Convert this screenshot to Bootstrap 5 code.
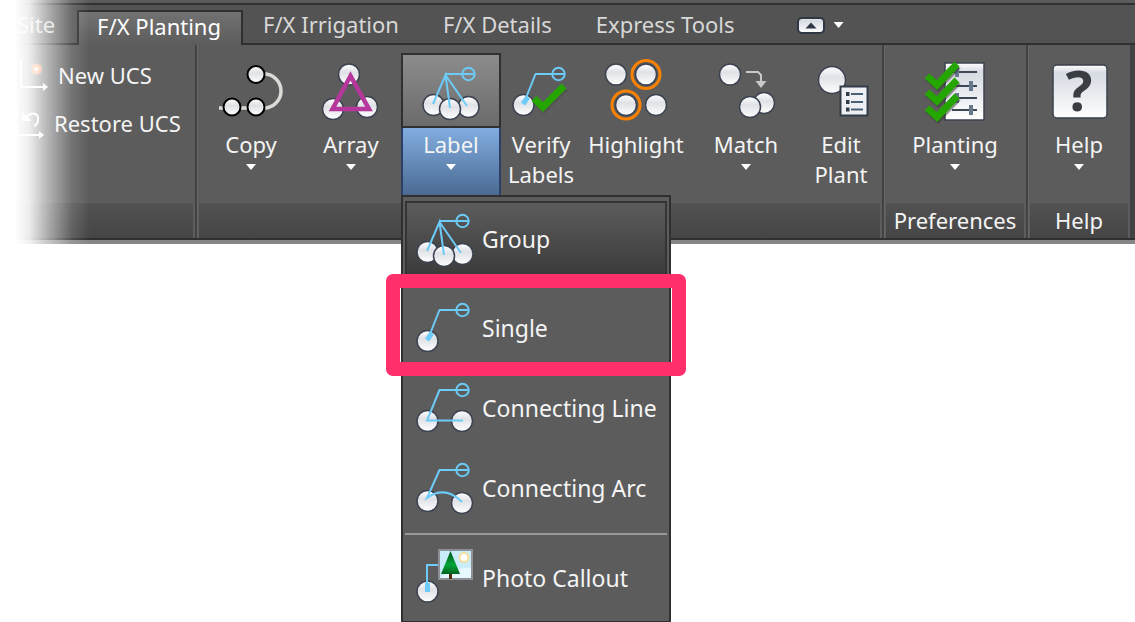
<!DOCTYPE html>
<html lang="en">
<head>
<meta charset="utf-8">
<meta name="viewport" content="width=device-width, initial-scale=1">
<title>F/X Planting ribbon</title>
<link href="https://cdn.jsdelivr.net/npm/bootstrap@5.3.0/dist/css/bootstrap.min.css" rel="stylesheet">
<style>
  body { font-family: "Noto Sans", "Open Sans", sans-serif; font-size: 22px; line-height: 30px; background: #fff; color: #f4f4f4; }
  button, a { color: inherit; font: inherit; }
  .fx-ribbon { background: #5c5c5c; border-bottom: 4px solid #858585; }
  .fx-tabs { height: 45px; padding: 5px 0 0 0; background: #535353; border-top: 3px solid #5a5a5a; box-shadow: inset 0 2px #303030, inset 0 -2px #303030; }
  .fx-tab { height: 37px; padding: 0 22px; line-height: 32px; color: #d8d8d8; text-decoration: none; white-space: nowrap; }
  .fx-tab:first-child { padding-left: 17px; }
  .fx-tab.active { height: 35px; align-self: flex-end; margin-right: -2px; padding: 0 20px 0 18px; line-height: 28px; color: #fff; background: linear-gradient(#727272, #5c5c5c); border: 2px solid #303030; border-bottom: 0; }
  .fx-collapse { margin-left: 40px; gap: 9px; height: 34px; }
  .fx-bare { background: none; border: 0; padding: 0; }
  .fx-panels { border-bottom: 2px solid #303030; }
  .fx-panel { border-right: 2px solid #424242; box-shadow: inset 1px 0 #686868; }
  .fx-tools { height: 158px; padding: 8px 4px 0 4px; }
  .fx-title { height: 35px; margin: 0 2px; line-height: 35px; text-align: center; background: linear-gradient(#525252, #454545); }
  .fx-ucs { width: 197px; }
  .fx-ucs .fx-tools { padding: 6px 0 0 20px; }
  .fx-ucs button { height: 48px; gap: 10px; }
  .fx-ucs button + button { margin-left: -4px; }
  .fx-tool { height: 142px; }
  .fx-face { height: 75px; padding-top: 9px; }
  .fx-name { padding-top: 1px; height: 67px; }
  .fx-open .fx-face { background: linear-gradient(#8c8c8c, #6b6b6b); border: 2px solid #303030; padding-top: 7px; }
  .fx-open .fx-name { background: linear-gradient(#82ade0, #4a6a92); border: 2px solid #2c3f66; border-top: 0; border-bottom: 0; }
  .fx-w80 { width: 80px; } .fx-w94 { width: 94px; } .fx-w100 { width: 100px; } .fx-w110 { width: 110px; } .fx-w134 { width: 134px; }
  .fx-caret { display: block; width: 10px; height: 6px; margin: 5px auto 0; background: #fff; clip-path: polygon(0 0, 100% 0, 50% 100%); }
  .fx-icon { width: 60px; height: 60px; overflow: visible; display: block; margin: 0 auto; }
  .fx-end { width: 3px; background: #444; }
  .fx-fade { position: absolute; inset: 0 auto -4px 0; width: 90px; pointer-events: none; background: linear-gradient(90deg, #fff 16%, rgba(255,255,255,.9) 32%, rgba(255,255,255,.5) 56%, rgba(255,255,255,.14) 80%, rgba(255,255,255,0)); }
  .fx-menu { position: absolute; top: 142px; left: 0; z-index: 5; width: 270px; padding: 4px 2px 2px; font-size: 23px; background: #5c5c5c; border: 2px solid #303030; }
  .fx-item { position: relative; height: 80px; padding: 0 0 2px 10px; gap: 7px; text-align: left; }
  .fx-item .fx-icon { margin: 0; flex: none; }
  .fx-item.fx-current { height: 78px; margin-bottom: 10px; background: linear-gradient(#5c5c5c, #3a3a3a); border: 2px solid #343434; padding-left: 8px; }
  .fx-mark { position: absolute; inset: -15px -19px -7px -19px; border: 14px solid #ff2f6b; border-radius: 7px; }
  .fx-menu hr { margin: 4px 0; border-top: 2px solid #999; opacity: 1; }
  .ball { fill: url(#ball); stroke: #3b4350; stroke-width: 1.5; }
  .wire { fill: none; stroke: #6ccbf7; stroke-width: 2; }
  .tick { fill: none; stroke: #24a500; stroke-width: 7; }
</style>
</head>
<body class="min-vh-100">
<svg width="0" height="0" class="position-absolute" aria-hidden="true">
  <defs>
    <linearGradient id="ball" x1="0" y1="0" x2="0" y2="1"><stop offset="0" stop-color="#fff"/><stop offset=".4" stop-color="#dfe1e6"/><stop offset="1" stop-color="#fff"/></linearGradient>
    <linearGradient id="paper" x1="0" y1="0" x2="0" y2="1"><stop offset="0" stop-color="#fff"/><stop offset=".15" stop-color="#d6dae2"/><stop offset="1" stop-color="#fff"/></linearGradient>
    <linearGradient id="tree" x1="0" y1="0" x2="0" y2="1"><stop offset="0" stop-color="#004d1c"/><stop offset=".6" stop-color="#00a537"/><stop offset="1" stop-color="#006320"/></linearGradient>
  </defs>
  <symbol id="loop" viewBox="0 0 60 60" overflow="visible"><g class="wire"><path d="M24 12H54"/><circle cx="47.500" cy="12" r="6.200"/></g></symbol>
  <symbol id="group" viewBox="0 0 60 60" overflow="visible">
    <circle class="ball" cx="12.500" cy="43" r="10.500"/><circle class="ball" cx="47.500" cy="45" r="10.500"/><circle class="ball" cx="29" cy="47" r="10.500"/>
    <path class="wire" d="M12 42 24.500 13 29 46M24.500 13 46 44"/><use href="#loop"/>
  </symbol>
  <symbol id="single" viewBox="0 0 60 60" overflow="visible">
    <circle class="ball" cx="12.500" cy="43" r="10.500"/><path class="wire" d="M15 36 24.500 12"/><path d="M17 35 12 42" fill="none" stroke="#6ccbf7" stroke-width="5"/><use href="#loop"/>
  </symbol>
</svg>

<header class="fx-ribbon position-relative">
  <nav class="fx-tabs d-flex" aria-label="Ribbon tabs">
    <a class="fx-tab" href="#site">Site</a>
    <a class="fx-tab active" href="#planting" aria-current="page">F/X Planting</a>
    <a class="fx-tab" href="#irrigation">F/X Irrigation</a>
    <a class="fx-tab" href="#details">F/X Details</a>
    <a class="fx-tab" href="#express">Express Tools</a>
    <button class="fx-bare fx-collapse d-flex align-items-center" aria-label="Minimize ribbon">
      <svg width="28" height="17" viewBox="0 0 28 17"><rect x="1" y="1" width="26" height="15" rx="4" fill="url(#paper)" stroke="#2f3744" stroke-width="2"/><path d="M8.500 11.500 14 5.500 19.500 11.500Z" fill="#2f3744"/></svg>
      <span class="fx-caret mt-0"></span>
    </button>
  </nav>

  <div class="fx-panels d-flex">
    <section class="fx-panel fx-ucs flex-shrink-0">
      <div class="fx-tools">
        <button class="fx-bare d-flex align-items-center text-nowrap">
          <svg width="28" height="34" viewBox="0 0 28 34"><path d="M1 1V29H24" fill="none" stroke="#fff" stroke-width="2"/><path d="M23 25 28 29 23 33Z" fill="#fff"/><g stroke="#ff8a4a" stroke-width="3"><path d="M11 11H22M16.500 5.500V16.500M12.500 7 20.500 15M20.500 7 12.500 15"/></g><circle cx="16.500" cy="11" r="2" fill="#fff"/></svg>
          New UCS
        </button>
        <button class="fx-bare d-flex align-items-center text-nowrap">
          <svg width="28" height="34" viewBox="0 0 28 34"><path d="M1 1V29H24" fill="none" stroke="#fff" stroke-width="2"/><path d="M23 25 28 29 23 33Z" fill="#fff"/><path d="M10 12C16 4 23 8 22 14C22 17 20 19 18 20" fill="none" stroke="#fff" stroke-width="2"/><path d="M6 6V15H15Z" fill="#fff"/></svg>
          Restore UCS
        </button>
      </div>
      <div class="fx-title"></div>
    </section>

    <section class="fx-panel flex-grow-1">
      <div class="fx-tools d-flex pe-0">
        <button class="fx-bare fx-tool fx-w100">
          <span class="fx-face d-block"><svg class="fx-icon" viewBox="0 0 60 60"><path d="M-2 46H35M43 12A17 17 0 0 1 43 46" fill="none" stroke="#dcdad6" stroke-width="3.500"/><g fill="url(#ball)" stroke="#000" stroke-width="2"><circle cx="35" cy="12.500" r="8.500"/><circle cx="11" cy="45" r="8.500"/><circle cx="35" cy="45" r="8.500"/></g></svg></span>
          <span class="fx-name d-block">Copy<span class="fx-caret"></span></span>
        </button>
        <button class="fx-bare fx-tool fx-w100">
          <span class="fx-face d-block"><svg class="fx-icon" viewBox="0 0 60 60"><circle class="ball" cx="28" cy="12.500" r="10.500"/><circle class="ball" cx="12" cy="47" r="10.500"/><circle class="ball" cx="46" cy="45" r="10.500"/><path d="M29.500 14 11.500 47H48Z" fill="none" stroke="#b5379b" stroke-width="4.500"/></svg></span>
          <span class="fx-name d-block">Array<span class="fx-caret"></span></span>
        </button>
        <div class="dropdown">
          <button class="fx-bare fx-tool fx-w100 fx-open" aria-expanded="true">
            <span class="fx-face d-block"><svg class="fx-icon"><use href="#group"/></svg></span>
            <span class="fx-name d-block">Label<span class="fx-caret"></span></span>
          </button>
          <div class="fx-menu">
            <button class="fx-bare fx-item fx-current d-flex align-items-center w-100"><svg class="fx-icon"><use href="#group"/></svg>Group</button>
            <button class="fx-bare fx-item d-flex align-items-center w-100"><svg class="fx-icon"><use href="#single"/></svg>Single<span class="fx-mark"></span></button>
            <button class="fx-bare fx-item d-flex align-items-center w-100 text-nowrap"><svg class="fx-icon" viewBox="0 0 60 60"><circle class="ball" cx="12.500" cy="43" r="10.500"/><circle class="ball" cx="47" cy="43" r="10.500"/><path class="wire" d="M24.500 12 12 42.500H48"/><use href="#loop"/></svg>Connecting Line</button>
            <button class="fx-bare fx-item d-flex align-items-center w-100 text-nowrap"><svg class="fx-icon" viewBox="0 0 60 60"><circle class="ball" cx="12.500" cy="43" r="10.500"/><circle class="ball" cx="47" cy="45" r="10.500"/><path class="wire" d="M24.500 12 12 40Q30 27 47 44"/><use href="#loop"/></svg>Connecting Arc</button>
            <hr>
            <button class="fx-bare fx-item d-flex align-items-center w-100 text-nowrap"><svg class="fx-icon" viewBox="0 0 60 60"><circle class="ball" cx="12.500" cy="43.500" r="10.500"/><path class="wire" d="M24 17H12V36"/><path d="M12.500 35V44" stroke="#6ccbf7" stroke-width="5"/><rect x="24" y="2" width="33" height="29" fill="#c9ecfb" stroke="#8d9094" stroke-width="2"/><path d="M25 30Q40 18 56 20V30Z" fill="#e6f7fd"/><circle cx="49" cy="9.500" r="4.500" fill="#fff" stroke="#f8dd9c" stroke-width="2"/><path d="M35.500 25V31" stroke="#4b2c12" stroke-width="3"/><path d="M35.500 3 45 26H26Z" fill="url(#tree)"/></svg>Photo Callout</button>
          </div>
        </div>
        <button class="fx-bare fx-tool fx-w80">
          <span class="fx-face d-block"><svg class="fx-icon" viewBox="0 0 60 60"><use href="#single"/><path d="M24 38 32 46 53 25" fill="none" stroke="#4a4a4a" stroke-width="7" opacity=".6" transform="translate(1 1)"/><path class="tick" d="M23 36.500 32 45 53 24"/></svg></span>
          <span class="fx-name d-block">Verify<br>Labels</span>
        </button>
        <button class="fx-bare fx-tool fx-w110">
          <span class="fx-face d-block"><svg class="fx-icon" viewBox="0 0 60 60"><circle class="ball" cx="10" cy="12.500" r="10.500"/><circle class="ball" cx="40" cy="12.500" r="10.500"/><circle class="ball" cx="20" cy="43" r="10.500"/><circle class="ball" cx="50" cy="43" r="10.500"/><g fill="none" stroke="#fb8100" stroke-width="3"><circle cx="40" cy="12.500" r="14"/><circle cx="20" cy="43" r="14"/></g></svg></span>
          <span class="fx-name d-block">Highlight</span>
        </button>
        <button class="fx-bare fx-tool fx-w110">
          <span class="fx-face d-block"><svg class="fx-icon" viewBox="0 0 60 60"><circle class="ball" cx="14" cy="12.500" r="10.500"/><circle class="ball" cx="48" cy="41" r="10.500"/><circle class="ball" cx="34" cy="45" r="10.500"/><path d="M30 10H42L45 13V20" fill="none" stroke="#c9c9c9" stroke-width="2"/><path d="M39.500 19H50.500L45 26Z" fill="#c9c9c9"/></svg></span>
          <span class="fx-name d-block">Match<span class="fx-caret"></span></span>
        </button>
        <button class="fx-bare fx-tool fx-w80">
          <span class="fx-face d-block"><svg class="fx-icon" viewBox="0 0 60 60"><circle class="ball" cx="21" cy="18" r="13.500"/><rect x="29.500" y="24.500" width="27" height="29" fill="#eef0f4" stroke="#333c49" stroke-width="2"/><path d="M40 32H52M40 40H52M40 47.500H52" stroke="#4a6076" stroke-width="2"/><path d="M35 32H38.500M35 40H38.500M35 47.500H38.500" stroke="#333c49" stroke-width="4"/></svg></span>
          <span class="fx-name d-block">Edit<br>Plant</span>
        </button>
      </div>
      <div class="fx-title"></div>
    </section>

    <section class="fx-panel">
      <div class="fx-tools">
        <button class="fx-bare fx-tool fx-w134">
          <span class="fx-face d-block"><svg class="fx-icon" viewBox="0 0 60 60"><rect x="20" y="1" width="39" height="57" fill="url(#paper)" stroke="#3b4350" stroke-width="1.500"/><path d="M27 10H52M27 24H52M27 36H52M27 48H52" stroke="#3f4855" stroke-width="2"/><path d="M32 5V15M46 19V29M32 31V41M46 43V53" stroke="#66798c" stroke-width="4"/><g fill="none" stroke="#333" stroke-width="7" opacity=".5" transform="translate(1 2)"><path d="M2 14 12 23 32 2"/><path d="M2 30 12 39 32 18"/><path d="M2 46 12 55 32 34"/></g><path class="tick" d="M2 14 12 23 32 2M2 30 12 39 32 18M2 46 12 55 32 34"/></svg></span>
          <span class="fx-name d-block">Planting<span class="fx-caret"></span></span>
        </button>
      </div>
      <div class="fx-title">Preferences</div>
    </section>

    <section class="fx-panel">
      <div class="fx-tools">
        <button class="fx-bare fx-tool fx-w94">
          <span class="fx-face d-block"><svg class="fx-icon" viewBox="0 0 60 60"><rect x="4" y="3" width="54" height="53" rx="4" fill="url(#paper)" stroke="#39414d" stroke-width="1.500"/><text x="30" y="49" text-anchor="middle" font-family="Open Sans, sans-serif" font-weight="700" font-size="56" fill="#3a3d42">?</text></svg></span>
          <span class="fx-name d-block">Help<span class="fx-caret"></span></span>
        </button>
      </div>
      <div class="fx-title">Help</div>
    </section>
    <div class="fx-end"></div>
  </div>
  <div class="fx-fade"></div>
</header>
<script src="https://cdn.jsdelivr.net/npm/bootstrap@5.3.0/dist/js/bootstrap.bundle.min.js"></script>
</body>
</html>
